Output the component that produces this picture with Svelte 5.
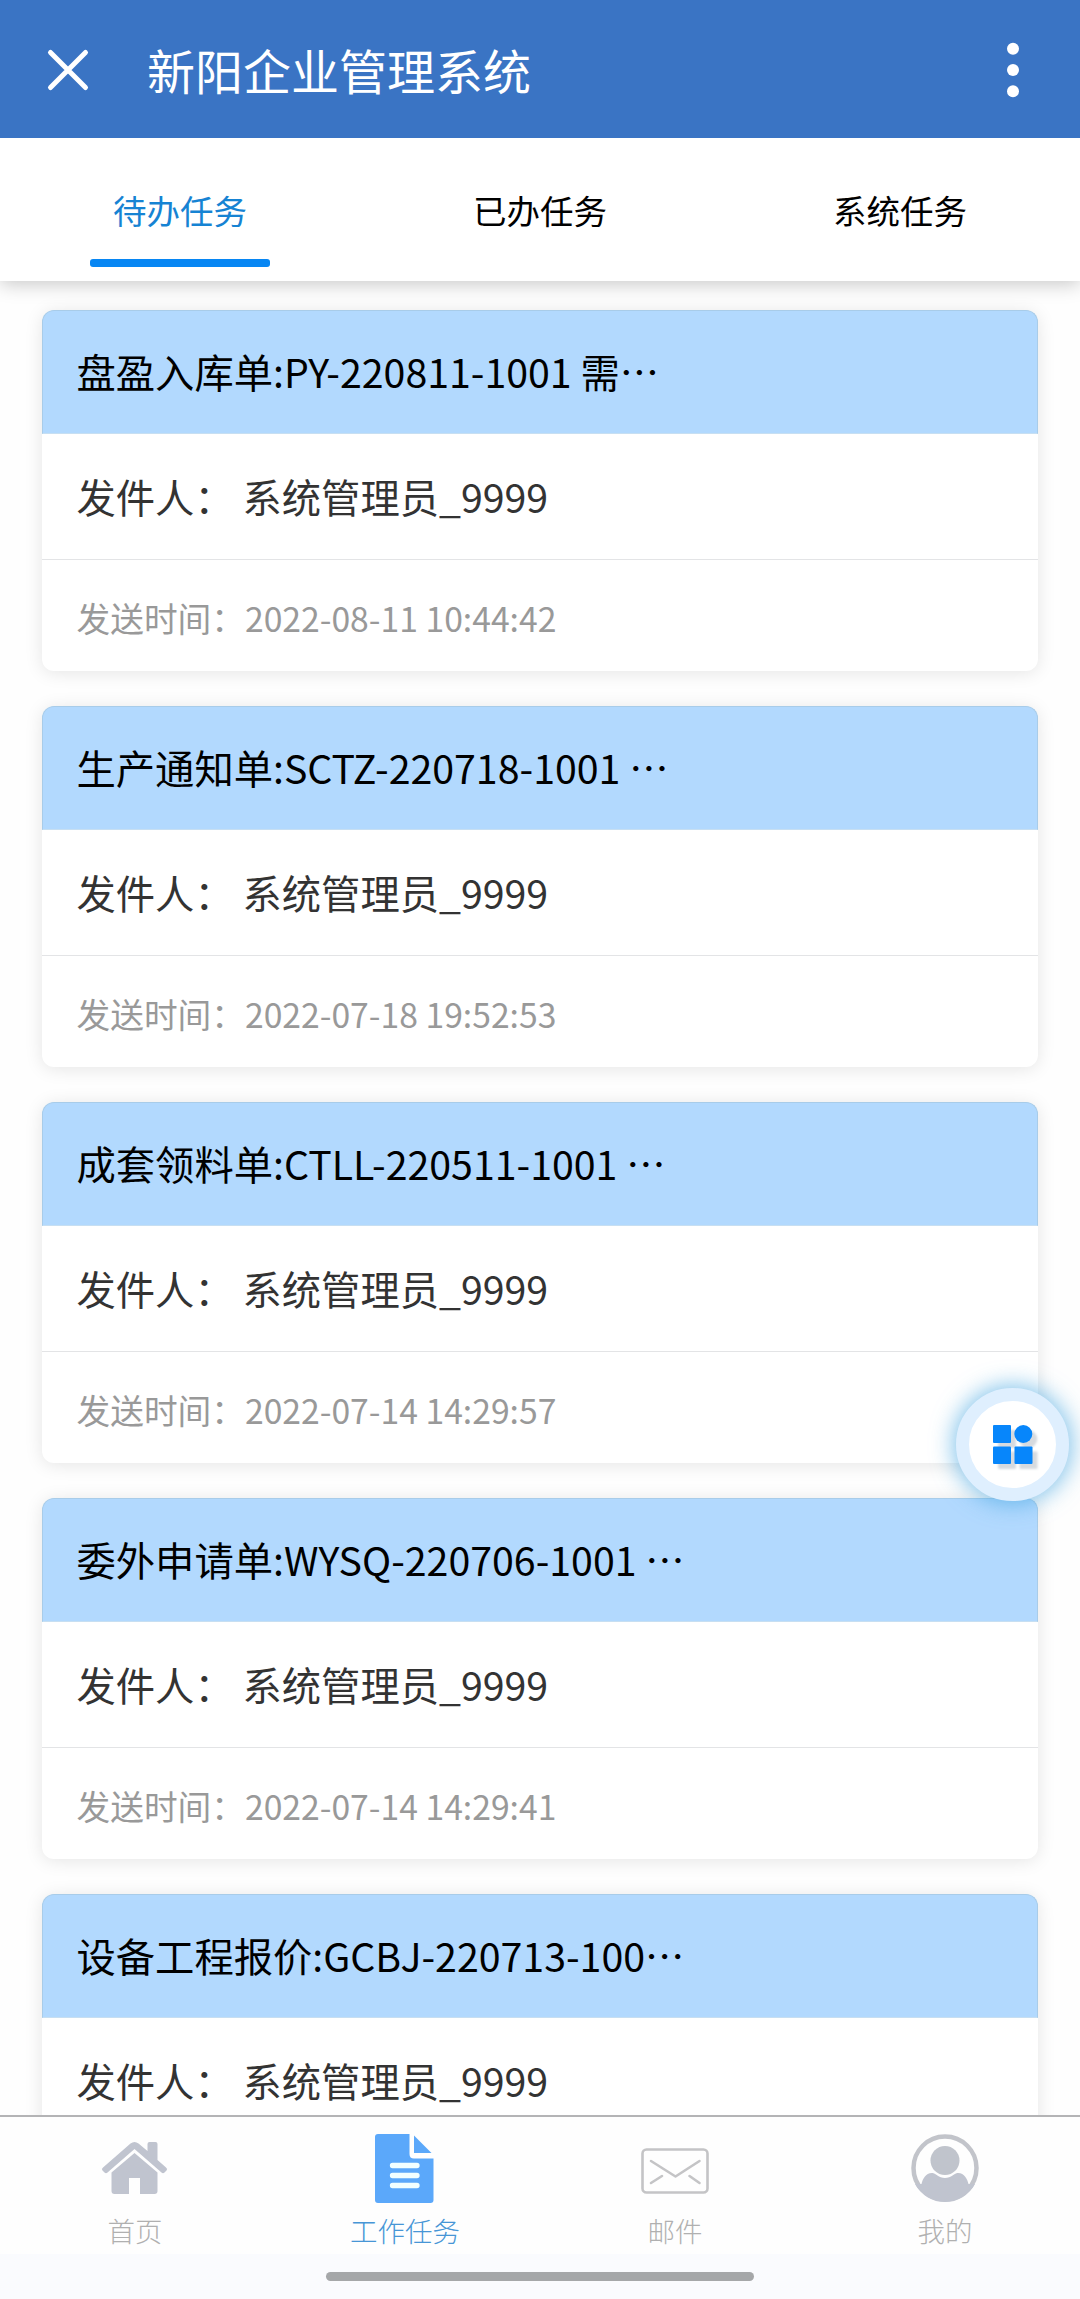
<script lang="ts">
  type Task = { title: string; sender: string; time?: string };

  const tabs = ["待办任务", "已办任务", "系统任务"];
  let activeTab = $state(0);

  const tasks: Task[] = [
    { title: "盘盈入库单:PY-220811-1001 需…", sender: "系统管理员_9999", time: "2022-08-11 10:44:42" },
    { title: "生产通知单:SCTZ-220718-1001 …", sender: "系统管理员_9999", time: "2022-07-18 19:52:53" },
    { title: "成套领料单:CTLL-220511-1001 …", sender: "系统管理员_9999", time: "2022-07-14 14:29:57" },
    { title: "委外申请单:WYSQ-220706-1001 …", sender: "系统管理员_9999", time: "2022-07-14 14:29:41" },
    { title: "设备工程报价:GCBJ-220713-100…", sender: "系统管理员_9999" },
  ];

  const nav = [
    { id: "home", label: "首页" },
    { id: "work", label: "工作任务" },
    { id: "mail", label: "邮件" },
    { id: "me", label: "我的" },
  ];
  let activeNav = $state("work");
</script>

<div class="app" lang="zh-CN">
  <header class="bar">
    <button class="icon-btn close" aria-label="关闭">
      <svg width="40" height="40" viewBox="0 0 40 40">
        <path d="M2.5 2.5 37.5 37.5M37.5 2.5 2.5 37.5" stroke="#fff" stroke-width="5" stroke-linecap="round" />
      </svg>
    </button>
    <h1>新阳企业管理系统</h1>
    <button class="icon-btn" aria-label="更多">
      <svg width="12" height="56" viewBox="0 0 12 56" fill="#fff">
        <circle cx="6" cy="6.7" r="6" />
        <circle cx="6" cy="28" r="6" />
        <circle cx="6" cy="49.3" r="6" />
      </svg>
    </button>
  </header>

  <div class="tabs">
    {#each tabs as tab, i}
      <button class="tab" class:active={activeTab === i} onclick={() => (activeTab = i)}>{tab}</button>
    {/each}
  </div>

  <main class="list">
    {#each tasks as task}
      <article class="card">
        <div class="card-header">{task.title}</div>
        <div class="card-content">发件人： {task.sender}</div>
        {#if task.time}
          <div class="card-footer">发送时间：{task.time}</div>
        {/if}
      </article>
    {/each}
  </main>

  <nav class="nav">
    {#each nav as item}
      <button class="nav-item" class:active={activeNav === item.id} onclick={() => (activeNav = item.id)}>
        <svg width="68" height="70" viewBox="0 0 68 70">
          {#if item.id === "home"}
            <g fill="#c0c4cf">
              <path d="M2 34.5 29.5 10.5Q33.5 7.5 37.5 10.5L46.5 18V11Q46.5 9 48.5 9H54.5Q56.5 9 56.5 11V27L65 34.5Q67 36 65.5 37.5L63.5 39.5Q62 41 60.5 39.5L33.5 16 6.5 39.5Q5 41 3.5 39.5L1.5 37.5Q0 36 2 34.5Z" />
              <path d="M33.5 20 56.5 39.5V58Q56.5 61 53.5 61H39V45H28V61H13.5Q10.5 61 10.5 58V39.5Z" />
            </g>
          {:else if item.id === "work"}
            <path d="M7 1H38.5V21Q38.5 25.5 43 25.5H62.5V67Q62.5 70 59.5 70H7Q4 70 4 67V4Q4 1 7 1Z" fill="#5ba8fa" />
            <path d="M43 2.5 60.5 20H43Z" fill="#5ba8fa" />
            <path d="M21.5 32.5H46M21.5 42.5H46M21.5 52.5H46" stroke="#f2ffff" stroke-width="5.3" stroke-linecap="round" />
          {:else if item.id === "mail"}
            <g fill="none" stroke="#c4c4c6" stroke-width="2.6" stroke-linecap="round" stroke-linejoin="round">
              <rect x="1.5" y="16.5" width="65" height="43" rx="4" />
              <path d="M10 28 34.5 43.5 58.5 28M10 50 21 43M58.5 50 48.5 43" />
            </g>
          {:else}
            <circle cx="34" cy="35" r="31.5" fill="none" stroke="#c2c4ca" stroke-width="4.5" />
            <circle cx="34" cy="27.5" r="14.5" fill="#c0c4cc" />
            <path d="M4 51H10.5C11.5 46 15 39.5 21.5 40 24 40 28 45 34 45S44 40 46.500 40C53 39.500 56.500 46 57.500 51H64A34 34 0 0 1 4 51Z" fill="#c0c4cf" />
          {/if}
        </svg>
        <span>{item.label}</span>
      </button>
    {/each}
  </nav>
  <div class="home-area"><i></i></div>

  <button class="fab" aria-label="应用">
    <svg width="48" height="48" viewBox="0 0 48 48">
      <g fill="#0786fb">
        <rect x="4" y="4" width="18" height="18" rx="1" />
        <circle cx="34.3" cy="13" r="9" />
        <rect x="4" y="25.5" width="18" height="17.5" rx="1" />
        <rect x="25.5" y="25.5" width="18" height="17.5" rx="1" />
      </g>
    </svg>
  </button>
</div>

<style>
  :global(body) { background: #fff; }
  .app {
    position: relative; display: flex; flex-direction: column;
    width: 1080px; height: 2299px; overflow: hidden; background: #fefefe;
    font-family: "Noto Sans CJK SC", sans-serif; color: #000;
  }
  button { border: 0; padding: 0; background: none; font: inherit; color: inherit; cursor: pointer; }
  svg { display: block; overflow: visible; }

  .bar {
    display: flex; align-items: center; flex-shrink: 0;
    height: 138px; padding: 2px 61px 0 48px; box-sizing: border-box;
    background: #3a74c4; color: #fff;
  }
  .bar h1 { flex: 1; margin: 0 0 3px 59px; font-size: 48px; font-weight: 400; line-height: 70px; }

  .tabs {
    position: relative; z-index: 1; display: flex; flex-shrink: 0; height: 143px;
    background: #fff; box-shadow: 0 3px 18px rgba(0, 0, 0, 0.22);
    clip-path: inset(0 0 -40px 0);
  }
  .tab { position: relative; flex: 1; font-size: 33.5px; line-height: 48px; }
  .tab.active { color: #1683d3; }
  .tab.active::after {
    content: ""; position: absolute; left: 90px; bottom: 14px;
    width: 180px; height: 8px; border-radius: 3px; background: #0786f3;
  }

  .list { flex: 1; min-height: 0; overflow: hidden; padding: 29px 42px 0; }
  .card {
    height: 361px; margin-bottom: 35px; border-radius: 12px; background: #fff;
    box-shadow: 0 2px 18px rgba(0, 0, 0, 0.1);
  }
  .card > div { box-sizing: border-box; white-space: nowrap; }
  .card-header {
    height: 124px; padding: 32px 33.5px 0; line-height: 56px; font-size: 39.3px;
    background: #b2d9fe; border: 1px solid #a8cce9; border-bottom-color: #c7dff2;
    border-radius: 12px 12px 0 0;
  }
  .card-content {
    height: 126px; padding: 34px 34.5px 0; line-height: 56px; font-size: 39.3px;
    color: #333; border-bottom: 1px solid #e3e4e6;
  }
  .card-footer { height: 111px; padding: 34px 34.5px 0; line-height: 48px; font-size: 33.7px; color: #999; }

  .nav {
    display: flex; flex-shrink: 0; height: 139px; box-sizing: border-box;
    border-top: 2px solid #b4b4b6; background: #fefefe;
  }
  .nav-item {
    flex: 1; display: flex; flex-direction: column; align-items: center;
    padding-top: 16px; font-size: 27.5px; font-weight: 300; line-height: 40px; color: #b0b0b0;
  }
  .nav-item span { margin-top: 7px; }
  .nav-item.active { color: #4796d6; }

  .home-area { display: flex; justify-content: center; flex-shrink: 0; height: 45px; background: #fafbfe; }
  .home-area i { width: 428px; height: 9px; margin-top: 18px; border-radius: 5px; background: #a5a7a9; }

  .fab {
    position: absolute; z-index: 2; left: 956px; top: 1388px;
    display: flex; align-items: center; justify-content: center;
    width: 113px; height: 113px; box-sizing: border-box; border-radius: 50%;
    border: 13.5px solid #dfeffe; background: #fff;
    box-shadow: 0 0 22px 3px rgba(66, 165, 225, 0.65);
  }
  .fab svg { filter: drop-shadow(5px 5px 1px rgba(30, 50, 80, 0.18)); }
</style>
